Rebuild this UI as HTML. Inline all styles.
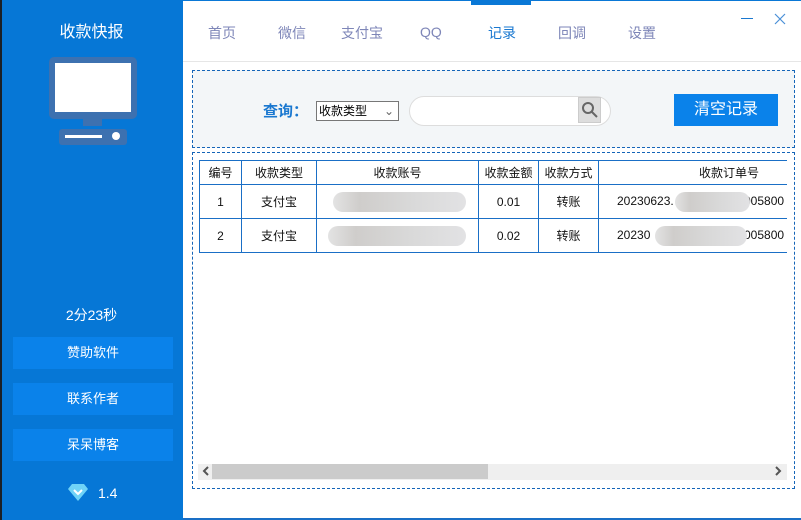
<!DOCTYPE html>
<html><head><meta charset="utf-8"><style>
*{margin:0;padding:0;box-sizing:border-box}
body{width:801px;height:520px;position:relative;overflow:hidden;background:#fff;font-family:"Liberation Sans","Noto Sans CJK SC",sans-serif}
.a{position:absolute}
.side{left:0;top:0;width:183px;height:520px;background:#0677d6;border-left:2px solid #1b1f24}
.btn{left:13px;width:160px;height:32px;background:#0a82ea;color:#fff;font-size:13px;text-align:center;line-height:32px}
.tab{top:23px;font-size:14px;color:#7e86b8}
.dash{border:1px dashed #1565b8}
table{border-collapse:collapse;font-size:12px;color:#111}
td{border:1px solid #1a6fc6;text-align:center;height:34px}
tr:first-child td{height:24px}
.blur{position:absolute;height:20px;border-radius:10px;background:linear-gradient(90deg,#e3e3e3,#cfcdcb 20%,#d9d9d9 60%,#e2e2e4)}
.t{position:absolute;font-size:12px;color:#111}
</style></head><body>
<div class="a side"></div>
<div class="a" style="left:0;top:18px;width:183px;text-align:center;color:#fff;font-size:16px">收款快报</div>
<div class="a" style="left:49px;top:57px;width:88px;height:62px;background:#3d71b0;border-radius:5px"></div>
<div class="a" style="left:55px;top:63px;width:76px;height:49px;background:#fff"></div>
<div class="a" style="left:83px;top:119px;width:19px;height:7px;background:#3d71b0"></div>
<div class="a" style="left:59px;top:129px;width:68px;height:16px;background:#3d71b0;border-radius:3px"></div>
<div class="a" style="left:65px;top:135px;width:37px;height:3px;background:#fff"></div>
<div class="a" style="left:112px;top:132px;width:8px;height:8px;background:#fff;border-radius:50%"></div>
<div class="a" style="left:0;top:305px;width:183px;text-align:center;color:#fff;font-size:14px">2分23秒</div>
<div class="a btn" style="top:337px">赞助软件</div>
<div class="a btn" style="top:383px">联系作者</div>
<div class="a btn" style="top:429px">呆呆博客</div>
<svg class="a" style="left:68px;top:484px" width="20" height="17" viewBox="0 0 20 17"><path d="M4 0H16L20 5L10 17L0 5Z" fill="#6fd3f7"/><path d="M6 6L10 10L14 6" stroke="#fff" stroke-width="2" fill="none"/></svg>
<div class="a" style="left:98px;top:485px;color:#fff;font-size:14px">1.4</div>

<div class="a" style="left:183px;top:0;width:618px;height:1px;background:#0a78d6"></div>
<div class="a" style="left:471px;top:0;width:60px;height:5px;background:#0a78d6"></div>
<div class="a" style="left:183px;top:61px;width:618px;height:1px;background:#e6e6e6"></div>
<div class="a tab" style="left:208px">首页</div>
<div class="a tab" style="left:278px">微信</div>
<div class="a tab" style="left:341px">支付宝</div>
<div class="a tab" style="left:420px;top:24px">QQ</div>
<div class="a tab" style="left:488px;color:#1a78d0">记录</div>
<div class="a tab" style="left:558px">回调</div>
<div class="a tab" style="left:628px">设置</div>
<div class="a" style="left:741px;top:18px;width:12px;height:1px;background:#1a78d0"></div>
<svg class="a" style="left:774px;top:13px" width="12" height="12"><path d="M1 1L11 11M11 1L1 11" stroke="#4a90d8" stroke-width="1.2"/></svg>

<div class="a dash" style="left:192px;top:70px;width:603px;height:78px;background:#f3f6f8"></div>
<div class="a" style="left:263px;top:100px;color:#1a78d0;font-size:15px;font-weight:bold">查询：</div>
<div class="a" style="left:316px;top:101px;width:83px;height:20px;border:1px solid #777;background:#fff;font-size:12px;line-height:18px;padding-left:2px">收款类型<span style="position:absolute;right:4px;color:#666">⌄</span></div>
<div class="a" style="left:409px;top:96px;width:202px;height:30px;border:1px solid #ddd;border-radius:15px;background:#fff"></div>
<div class="a" style="left:578px;top:97px;width:23px;height:26px;background:#ddd;border:1px solid #ccc"></div>
<svg class="a" style="left:581px;top:101px" width="18" height="18"><circle cx="7" cy="7" r="5" stroke="#666" stroke-width="2" fill="none"/><path d="M11 11L16 16" stroke="#666" stroke-width="2"/></svg>
<div class="a" style="left:674px;top:94px;width:104px;height:32px;background:#0a82ea;color:#fff;font-size:16px;text-align:center;line-height:32px">清空记录</div>

<div class="a dash" style="left:192px;top:152px;width:603px;height:337px"></div>
<div class="a" style="left:199px;top:160px;width:588px;height:95px;overflow:hidden">
<table style="width:620px">
<tr><td style="width:42px">编号</td><td style="width:75px">收款类型</td><td style="width:162px">收款账号</td><td style="width:60px">收款金额</td><td style="width:60px">收款方式</td><td style="text-align:left;padding-left:100px">收款订单号</td></tr>
<tr><td>1</td><td>支付宝</td><td></td><td>0.01</td><td>转账</td><td></td></tr>
<tr><td>2</td><td>支付宝</td><td></td><td>0.02</td><td>转账</td><td></td></tr>
</table></div>
<div class="t" style="left:617px;top:194px">20230623.</div>
<div class="t" style="left:617px;top:228px">20230</div>
<div class="t" style="left:744px;top:194px">005800</div>
<div class="t" style="left:744px;top:228px">005800</div>
<div class="blur" style="left:333px;top:192px;width:133px"></div>
<div class="blur" style="left:328px;top:226px;width:138px"></div>
<div class="blur" style="left:675px;top:192px;width:75px"></div>
<div class="blur" style="left:655px;top:226px;width:92px"></div>

<div class="a" style="left:198px;top:464px;width:589px;height:16px;background:#efefef"></div>
<div class="a" style="left:212px;top:464px;width:276px;height:15px;background:#cbcbcb"></div>
<svg class="a" style="left:202px;top:466px" width="8" height="10"><path d="M6 1L2 5L6 9" stroke="#555" stroke-width="2" fill="none"/></svg>
<svg class="a" style="left:774px;top:466px" width="8" height="10"><path d="M2 1L6 5L2 9" stroke="#555" stroke-width="2" fill="none"/></svg>
<div class="a" style="left:183px;top:518px;width:618px;height:2px;background:#1a6fc6"></div>
</body></html>
